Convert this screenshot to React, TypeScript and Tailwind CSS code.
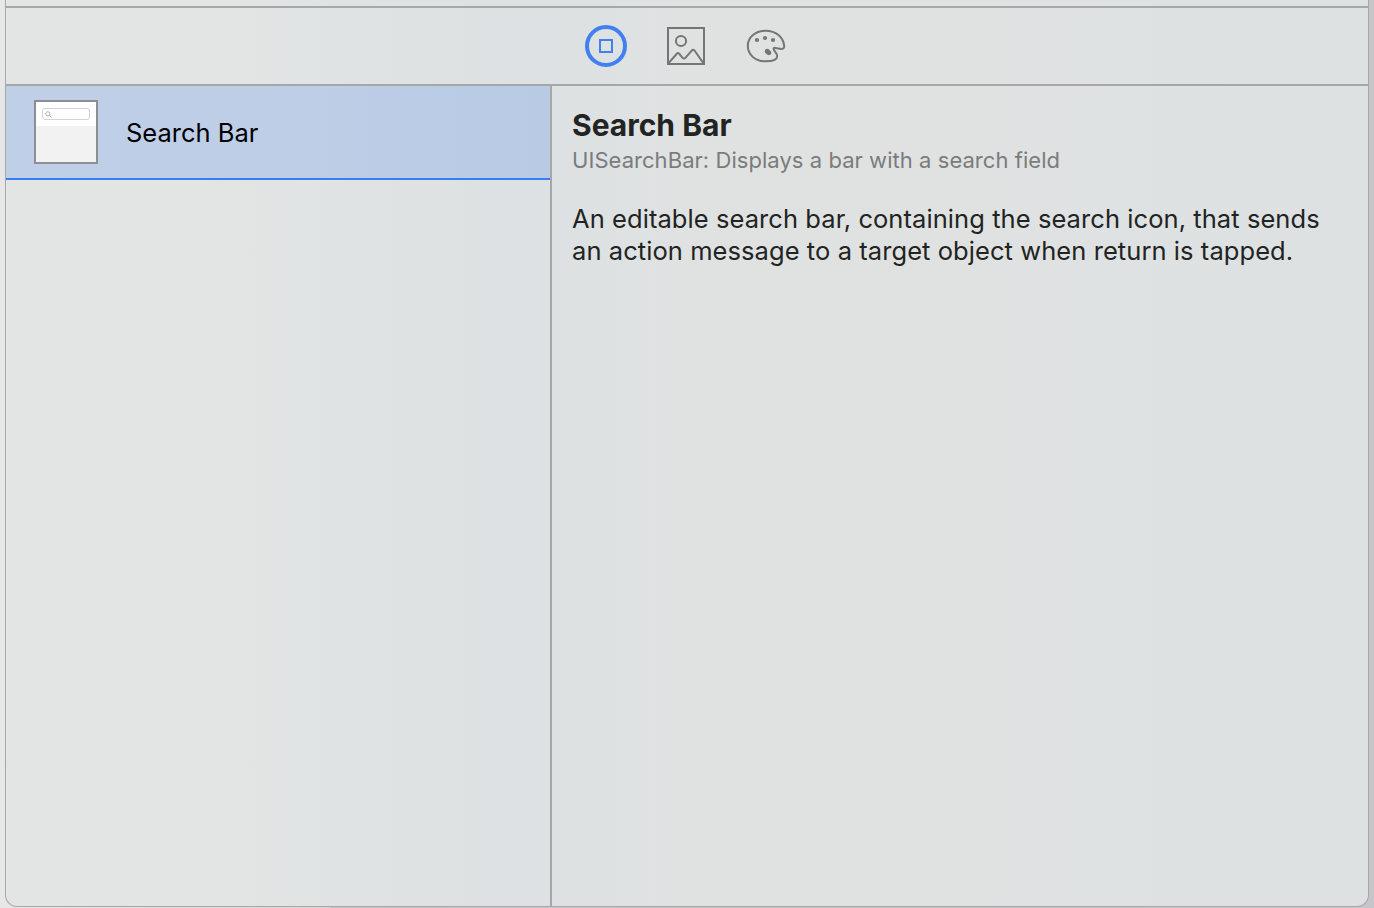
import React from "react";

function ObjectsIcon() {
  return (
    <svg width="42" height="42" viewBox="0 0 42 42" fill="none" stroke="#427ff0">
      <circle cx="21" cy="21" r="19" strokeWidth="4" />
      <rect x="15" y="15" width="12" height="12" strokeWidth="2" />
    </svg>
  );
}

function MediaIcon() {
  return (
    <svg width="42" height="42" viewBox="0 0 42 42" fill="none" stroke="#747676" strokeWidth="2">
      <rect x="3" y="3" width="36" height="36" />
      <circle cx="16" cy="16" r="5.1" />
      <path d="M4 37.6L11.6 29Q13 27.2 14.4 29L17.6 32.8Q19 34.4 20.4 32.8L26.7 25.6Q28.3 23.8 29.7 25.8L38 37.6" />
    </svg>
  );
}

function ColorIcon() {
  return (
    <svg width="42" height="42" viewBox="0 0 42 42" fill="none">
      <path
        d="M39.2 21.2C38.4 12 30.8 5.7 20.7 5.7C10.6 5.7 2.8 12 2.8 20.8C2.8 29.7 10.2 36.3 20.7 36.3C27.6 36.3 32.2 34.4 32.2 31C32.2 28.6 29.4 26.4 28.8 24.6C28.3 23.1 29 22.6 30.5 22.9C34 23.6 39.6 25.4 39.2 21.2Z"
        stroke="#747676"
        strokeWidth="2"
      />
      <g fill="#747676">
        <circle cx="12" cy="15" r="2.1" />
        <circle cx="20" cy="13" r="2.1" />
        <circle cx="28" cy="15" r="2.1" />
        <ellipse cx="23" cy="27" rx="3.6" ry="2.6" transform="rotate(45 23 27)" />
      </g>
    </svg>
  );
}

function SearchBarThumbnail() {
  return (
    <div className="h-16 w-16 shrink-0 border-2 border-[#8e8e92] bg-[#f2f2f2]">
      <div className="h-6 bg-white px-1.5 pt-1.5">
        <div className="flex h-3 w-12 items-center rounded-[3px] border border-[#d3d3d5] pl-[2px]">
          <svg width="7" height="7" viewBox="0 0 7 7" fill="none" stroke="#a9a9ab" strokeWidth="0.9">
            <circle cx="2.8" cy="2.8" r="2.1" />
            <path d="M4.4 4.4L6.5 6.5" />
          </svg>
        </div>
      </div>
    </div>
  );
}

export default function App() {
  return (
    <div className="h-[908px] w-[1374px] overflow-hidden bg-[linear-gradient(90deg,#e7e7e7_0px,#d6d6d7_330px,#c6c6ca_331px,#c6c6ca_1374px)] pr-[5px] pl-[5px] font-['Inter',sans-serif]">
      <div className="flex h-[907px] flex-col overflow-hidden rounded-b-[12px] border-x border-b border-[#a6a8a8] bg-[linear-gradient(90deg,#e2e5e4_0%,#e2e5e4_17%,#dfe2e3_29%,#dde1e3_39%,#e0e2e2_50%,#e0e2e2_70%,#dde1e2_100%)]">
        <div className="h-2 shrink-0 border-b-2 border-[#a6a8a8]" />
        <div className="flex h-[78px] shrink-0 justify-center gap-[38px] border-b-2 border-[#a6a8a8] pr-[2px] pt-[17px]">
          <ObjectsIcon />
          <MediaIcon />
          <ColorIcon />
        </div>
        <div className="flex min-h-0 flex-1">
          <div className="w-[544px] shrink-0">
            <div className="flex h-[94px] items-center border-b-2 border-[#397df2] bg-[linear-gradient(90deg,#c0cfe8_0%,#bfcee7_50%,#b8cae4_100%)] pl-7">
              <SearchBarThumbnail />
              <span className="ml-7 pt-0.5 text-[25.5px] leading-8 font-[430] text-black">Search Bar</span>
            </div>
          </div>
          <div className="flex-1 border-l-2 border-[#a6a8a8] pl-5 pt-[19px]">
            <h1 className="text-[30px] leading-10 font-bold text-[#222423]">Search Bar</h1>
            <p className="text-[22px] leading-[30px] tracking-[0.05px] whitespace-nowrap text-[#7a7c7c]">
              UISearchBar: Displays a bar with a search field
            </p>
            <p className="mt-[28px] text-[25.5px] leading-8 font-[430] tracking-[0.07px] whitespace-nowrap text-[#222423]">
              An editable search bar, containing the search icon, that sends
              <br />
              an action message to a target object when return is tapped.
            </p>
          </div>
        </div>
      </div>
    </div>
  );
}
